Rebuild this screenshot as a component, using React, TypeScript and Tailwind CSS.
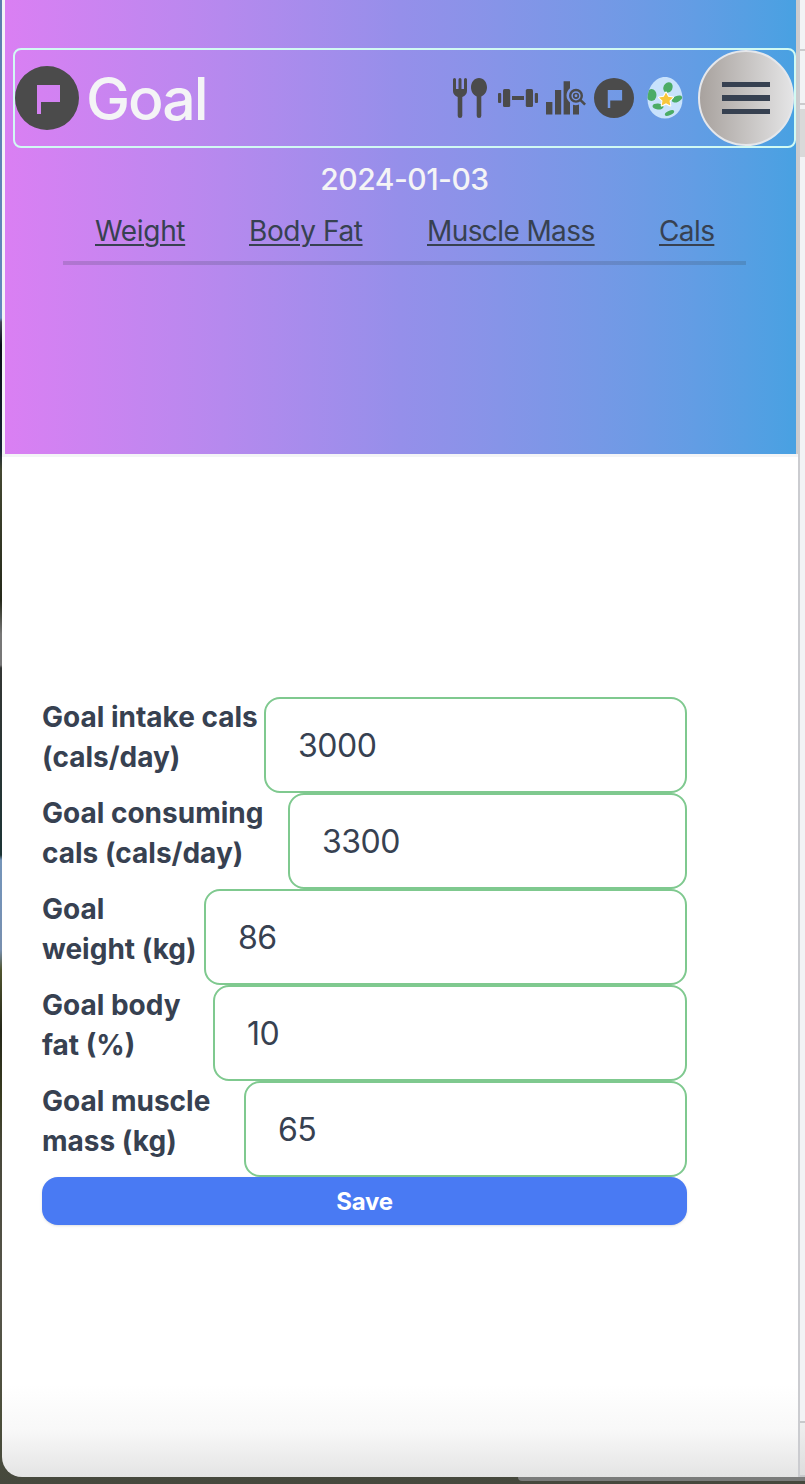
import React from "react";

const tabs = [
  { label: "Weight", cls: "w-[90px] tracking-[-0.330px]" },
  { label: "Body Fat", cls: "w-[114px] tracking-[-0.400px]" },
  { label: "Muscle Mass", cls: "w-[168px] tracking-[-0.600px]" },
  { label: "Cals", cls: "w-[56px] tracking-[-0.600px]" },
];

const fields = [
  { lines: ["Goal intake cals", "(cals/day)"], value: "3000", cls: "w-[222px]" },
  { lines: ["Goal consuming", "cals (cals/day)"], value: "3300", cls: "w-[246px]" },
  { lines: ["Goal", "weight (kg)"], value: "86", cls: "w-[162px]" },
  { lines: ["Goal body", "fat (%)"], value: "10", cls: "w-[171px]" },
  { lines: ["Goal muscle", "mass (kg)"], value: "65", cls: "w-[202px]" },
];

function FlagIcon({ className }: { className: string }) {
  return (
    <svg viewBox="0 0 64 64" className={className} fill="#4b4b4b">
      <path
        fillRule="evenodd"
        d="M32 0a32 32 0 1 0 0 64a32 32 0 1 0 0-64ZM22 19h23v17H26v12h-4Z"
      />
    </svg>
  );
}

function UtensilsIcon() {
  return (
    <svg viewBox="0 0 36 40" className="h-10 w-9 shrink-0" fill="#4b4b4b">
      <path d="M1 1.500a1.500 1.500 0 0 1 3 0V11h2.500V1.500a1.500 1.500 0 0 1 3 0V11H12V1.500a1.500 1.500 0 0 1 3 0V13c0 3-1.700 4.600-4.700 6v18.700a2.300 2.300 0 0 1-4.600 0V19C2.700 17.600 1 16 1 13Z" />
      <path d="M27 0c4.500 0 8 4.200 8 9.300 0 4.200-2.300 7.800-5.700 9.100v19.300a2.300 2.300 0 0 1-4.600 0V18.400C21.300 17.100 19 13.500 19 9.300 19 4.200 22.500 0 27 0Z" />
    </svg>
  );
}

function DumbbellIcon() {
  return (
    <svg viewBox="0 0 40 40" className="h-10 w-10 shrink-0" fill="#4b4b4b">
      <rect x="0" y="15" width="3.200" height="10" rx="1" />
      <rect x="5" y="11" width="7.200" height="18" rx="1.500" />
      <rect x="14" y="18" width="12" height="4" />
      <rect x="27.800" y="11" width="7.200" height="18" rx="1.500" />
      <rect x="36.800" y="15" width="3.200" height="10" rx="1" />
    </svg>
  );
}

function AnalyticsIcon() {
  return (
    <svg viewBox="0 0 40 40" className="h-10 w-10 shrink-0" fill="#4b4b4b">
      <path d="M0 24h6.400v12.500H0ZM9 12h6.200v24.500H9ZM17.600 3.200H24v7.100a9 9 0 0 0 0 14.200v12h-6.400ZM27 26.800c2 .6 4.200.5 6-.3v10h-6Z" />
      <circle cx="30" cy="17.800" r="5.800" fill="none" stroke="#4b4b4b" strokeWidth="2.400" />
      <circle cx="30" cy="17.800" r="2.300" fill="none" stroke="#4b4b4b" strokeWidth="1.700" />
      <path d="m34.300 21.900 4.800 4.700" stroke="#4b4b4b" strokeWidth="2.600" />
    </svg>
  );
}

function EggIcon() {
  return (
    <svg viewBox="0 0 36 42" className="h-[42px] w-9 shrink-0">
      <defs>
        <clipPath id="egg">
          <path d="M18 0C28 0 35.500 10.500 35.500 22S28 41.500 18 41.500.5 33.500.5 22 8 0 18 0Z" />
        </clipPath>
      </defs>
      <g clipPath="url(#egg)">
        <rect width="36" height="42" fill="#c8e2fc" />
        <g fill="#4bac66">
          <ellipse cx="4.500" cy="18" rx="5" ry="6" />
          <ellipse cx="21" cy="10.500" rx="4.500" ry="5.500" transform="rotate(25 21 10.500)" />
          <ellipse cx="30" cy="22" rx="5.500" ry="3" transform="rotate(-25 30 22)" />
          <ellipse cx="11" cy="29.500" rx="5.500" ry="3" transform="rotate(5 11 29.500)" />
          <ellipse cx="22.500" cy="36" rx="5" ry="2.100" transform="rotate(-24 22.500 36)" />
        </g>
      </g>
      <path
        d="m19 15.500 2.200 4.200 4.800.7-3.500 3.400.8 4.800-4.300-2.300-4.300 2.300.8-4.800-3.500-3.400 4.800-.7Z"
        fill="#f7c63c"
        stroke="#fff"
        strokeWidth="2"
        strokeLinejoin="round"
        paintOrder="stroke"
      />
    </svg>
  );
}

function Header() {
  return (
    <header className="h-[457px] border-b-[3px] border-l-[3px] border-[#f3f4f6] pr-[2px] bg-[#cbcbcd]">
      <div className="h-[454px] w-[791px] bg-linear-to-r from-[#da7ff3] via-[#958fea] to-[#48a1e2] pt-12 pl-2">
        <div className="flex h-[100px] w-[783px] items-center rounded-lg border-2 border-[#d1faf3]">
          <FlagIcon className="size-16 shrink-0" />
          <h1 className="ml-[7px] w-[120px] pt-px text-[59px] leading-[72px] font-[450] tracking-[-2px] whitespace-nowrap text-[#f4f4f6]">
            Goal
          </h1>
          <div className="ml-auto flex items-center">
            <UtensilsIcon />
            <span className="w-[10px]" />
            <DumbbellIcon />
            <span className="w-2" />
            <AnalyticsIcon />
            <span className="w-2" />
            <FlagIcon className="size-10 shrink-0" />
            <span className="w-[13px]" />
            <EggIcon />
            <button
              aria-label="Menu"
              className="ml-[15px] flex size-24 shrink-0 items-center justify-center rounded-full border-2 border-[#e5e7eb] bg-linear-to-r from-[#a8a29e] to-[#e4e4e5]"
            >
              <span className="flex w-12 flex-col gap-2">
                <span className="h-[5.500px] bg-[#374151]" />
                <span className="h-[5.500px] bg-[#374151]" />
                <span className="h-[5.500px] bg-[#374151]" />
              </span>
            </button>
          </div>
        </div>
        <p className="mt-[11px] w-[783px] text-center text-[30px] leading-10 font-[450] tracking-[-0.500px] text-[#f4f4f6]">
          2024-01-03
        </p>
        <nav className="ml-[50px] flex h-[66px] w-[683px] gap-16 border-b-4 border-[#374151]/20 pt-3 pl-8 text-[28px] leading-10 text-[#374151]">
          {tabs.map((t) => (
            <a
              key={t.label}
              className={`${t.cls} shrink-0 whitespace-nowrap underline decoration-2 underline-offset-[3px]`}
            >
              {t.label}
            </a>
          ))}
        </nav>
      </div>
    </header>
  );
}

function GoalForm() {
  return (
    <form className="mt-[240px] ml-10 flex w-[645px] flex-col">
      {fields.map((f) => (
        <div key={f.value} className="flex h-24">
          <label
            className={`${f.cls} shrink-0 text-[28px] leading-10 font-bold whitespace-nowrap`}
          >
            {f.lines[0]}
            <br />
            {f.lines[1]}
          </label>
          <input
            className="h-24 min-w-0 flex-1 rounded-2xl border-2 border-[#7fc98f] bg-white px-8 pt-px text-[32px] leading-10 tracking-[-0.500px] outline-none"
            defaultValue={f.value}
          />
        </div>
      ))}
      <button
        type="button"
        className="h-12 rounded-2xl bg-[#497af3] pt-[2px] text-[24px] leading-8 font-bold tracking-[-0.200px] text-white shadow-sm"
      >
        Save
      </button>
    </form>
  );
}

export default function App() {
  return (
    <div className="relative flex h-[1484px] w-[805px] overflow-hidden bg-[linear-gradient(to_bottom,#5d7cae_0px,#6387bd_318px,#45475a_322px,#090c18_345px,#172335_450px,#444832_470px,#25291a_600px,#777777_634px,#777777_665px,#343634_668px,#1c3435_855px,#7595b9_860px,#7492b7_900px,#788fae_950px,#50552f_970px,#252719_1030px,#393c20_1100px,#48483b_1150px,#57564b_1300px,#4b4e3a_1420px,#46483d_1484px)] pl-[2px] font-['Inter',sans-serif] text-[#374151]">
      <div className="z-10 h-[1477px] w-[796px] shrink-0 overflow-hidden rounded-bl-[20px] bg-[linear-gradient(to_bottom,#fff_1385px,#f8f8f8_1430px,#e4e4e4_1477px)]">
        <Header />
        <GoalForm />
      </div>
      <aside className="flex h-[1477px] w-[7px] flex-col border-l-2 border-[#cbccd0] bg-[#f2f3f5]">
        <div className="h-[51px] border-b-2 border-[#cbcbcd]" />
        <div className="h-[54px] border-b-2 border-[#cbcbcd]" />
        <div className="mt-1 h-12 bg-[#d9d9d9]" />
        <div className="flex-1" />
        <div className="h-14 border-y-2 border-[#c8c9cb] bg-linear-to-b from-[#efefef] to-[#dddddd]" />
      </aside>
      <div className="absolute right-0 bottom-[3px] h-1 w-[287px] rounded-bl bg-[#7b7c7b]" />
    </div>
  );
}
